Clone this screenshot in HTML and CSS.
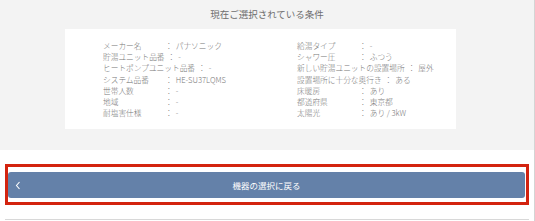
FILE: index.html
```html
<!DOCTYPE html>
<html lang="ja">
<head>
  <meta charset="UTF-8">
  <meta name="viewport" content="width=device-width, initial-scale=1.0">
  <title>現在ご選択されている条件</title>
  <link rel="stylesheet" href="styles.css">
</head>
<body>
  <div class="page">
    <section class="conditions">
      <h2 class="conditions-title">現在ご選択されている条件</h2>
      <div class="conditions-card">
        <ul class="cond-list">
          <li><span class="cond-label">メーカー名</span><span class="cond-sep">：</span>パナソニック</li>
          <li><span class="cond-label">貯湯ユニット品番</span><span class="cond-sep">：</span>-</li>
          <li><span class="cond-label">ヒートポンプユニット品番</span><span class="cond-sep">：</span>-</li>
          <li><span class="cond-label">システム品番</span><span class="cond-sep">：</span>HE-SU37LQMS</li>
          <li><span class="cond-label">世帯人数</span><span class="cond-sep">：</span>-</li>
          <li><span class="cond-label">地域</span><span class="cond-sep">：</span>-</li>
          <li><span class="cond-label">耐塩害仕様</span><span class="cond-sep">：</span>-</li>
        </ul>
        <ul class="cond-list">
          <li><span class="cond-label">給湯タイプ</span><span class="cond-sep">：</span>-</li>
          <li><span class="cond-label">シャワー圧</span><span class="cond-sep">：</span>ふつう</li>
          <li><span class="cond-label">新しい貯湯ユニットの設置場所</span><span class="cond-sep">：</span>屋外</li>
          <li><span class="cond-label">設置場所に十分な奥行き</span><span class="cond-sep">：</span>ある</li>
          <li><span class="cond-label">床暖房</span><span class="cond-sep">：</span>あり</li>
          <li><span class="cond-label">都道府県</span><span class="cond-sep">：</span>東京都</li>
          <li><span class="cond-label">太陽光</span><span class="cond-sep">：</span>あり / 3kW</li>
        </ul>
      </div>
    </section>

    <div class="actions">
      <div class="highlight">
        <button class="back-btn">
          <svg class="back-icon" width="6" height="9" viewBox="0 0 6 9">
            <polyline points="4.5,1 1.5,4.5 4.5,8" fill="none" stroke="#fff" stroke-width="1.1"/>
          </svg>
          機器の選択に戻る
        </button>
      </div>
      <div class="divider"></div>
    </div>
  </div>
</body>
</html>
```

FILE: styles.css
```css
body {
  margin: 0;
  font-family: "Noto Sans CJK JP", "Noto Sans", sans-serif;
  background-color: #fff;
  color: #777;
}
.page {
  width: 534px;
  height: 221px;
  border-right: 1px solid #d4d4d4;
  overflow: hidden;
}
.conditions {
  background-color: #f3f3f3;
  padding: 7px 0 21px;
}
.conditions-title {
  margin: 0 0 8px;
  font-size: 9.5px;
  line-height: 14px;
  font-weight: normal;
  text-align: center;
  color: #6e6e6e;
}
.conditions-card {
  background-color: #fff;
  margin-left: 65px;
  width: 391px;
  box-sizing: border-box;
  padding: 11px 0 10.6px 38px;
  display: grid;
  grid-template-columns: 194px 1fr;
}
.cond-list {
  list-style: none;
  margin: 0;
  padding: 0;
  font-size: 7.7px;
  line-height: 11.2px;
  white-space: nowrap;
  font-weight: 300;
}
.cond-label {
  display: inline-block;
  min-width: 59px;
}
.cond-sep {
  margin: 0 3px;
}
.actions {
  padding: 14px 5px 0;
}
.highlight {
  border: 3px solid #d3230f;
  padding: 5px 1px 4px 0;
}
.back-btn {
  position: relative;
  display: block;
  width: 100%;
  height: 26px;
  border: none;
  border-radius: 3px;
  background-color: #6481a9;
  color: #fff;
  font-family: inherit;
  font-size: 8.5px;
  cursor: pointer;
}
.back-icon {
  position: absolute;
  left: 7px;
  top: 9px;
}
.divider {
  margin-top: 14px;
  border-top: 1px solid #d8d8d8;
}
```
